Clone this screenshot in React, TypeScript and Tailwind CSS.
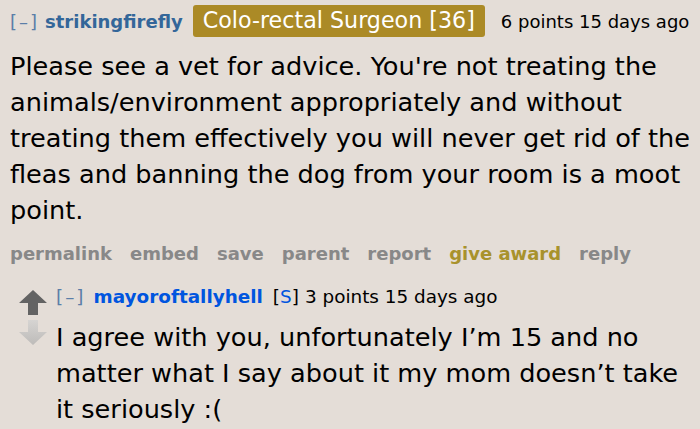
export default function App() {
  const buttons = ['permalink', 'embed', 'save', 'parent', 'report'];
  return (
    <div
      className="w-[700px] h-[429px] overflow-hidden bg-[#e4ddd7] text-black"
      style={{ fontFamily: '"DejaVu Sans", Verdana, sans-serif' }}
    >
      <div className="pl-[10px] pt-[5px]">
        <div className="flex items-center h-[32px] text-[18px] whitespace-nowrap">
          <span className="text-[#5b7ea8] tracking-[2px]">[–]</span>
          <span className="ml-[6px] font-bold text-[#336699]">strikingfirefly</span>
          <span className="ml-[10px] h-[32px] px-[10px] flex items-center rounded-[3px] bg-[#ab8a26] text-white text-[22.2px]">
            Colo-rectal Surgeon [36]
          </span>
          <span className="ml-[16px]">6 points 15 days ago</span>
        </div>
        <p className="mt-[11px] pr-[10px] text-[25.6px] leading-[36px]">
          Please see a vet for advice. You're not treating the animals/environment appropriately and without
          treating them effectively you will never get rid of the fleas and banning the dog from your room is a moot
          point.
        </p>
        <div className="mt-[14px] flex gap-[18px] text-[18px] leading-[24px] font-bold text-[#888888]">
          {buttons.map((b) => (
            <span key={b}>{b}</span>
          ))}
          <span className="text-[#a8922c]">give award</span>
          <span>reply</span>
        </div>
        <div className="mt-[18px] flex">
          <div className="w-[46px] flex flex-col items-center pt-[6px]">
            <svg width="28" height="25" viewBox="0 0 28 25">
              <path d="M14 0 L28 13 L19 13 L19 25 L9 25 L9 13 L0 13 Z" fill="#636363" />
            </svg>
            <svg width="28" height="25" viewBox="0 0 28 25" className="mt-[5px]">
              <defs>
                <linearGradient id="dn" x1="0" y1="0" x2="0" y2="1">
                  <stop offset="0" stopColor="#d6d4d2" />
                  <stop offset="1" stopColor="#bdbbb9" />
                </linearGradient>
              </defs>
              <path d="M9 0 L19 0 L19 12 L28 12 L14 25 L0 12 L9 12 Z" fill="url(#dn)" />
            </svg>
          </div>
          <div className="flex-1">
            <div className="text-[18.4px] whitespace-nowrap h-[26px] flex items-center">
              <span className="text-[#5b7ea8] tracking-[2px]">[–]</span>
              <span className="ml-[8px] font-bold text-[#0055df]">mayoroftallyhell</span>
              <span className="ml-[10px]">
                [<span className="text-[#0055df]">S</span>]
              </span>
              <span className="ml-[6px]">3 points 15 days ago</span>
            </div>
            <p className="mt-[9px] text-[25.6px] leading-[36px] pr-[20px]">
              I agree with you, unfortunately I’m 15 and no matter what I say about it my mom doesn’t take it
              seriously :(
            </p>
          </div>
        </div>
      </div>
    </div>
  );
}
